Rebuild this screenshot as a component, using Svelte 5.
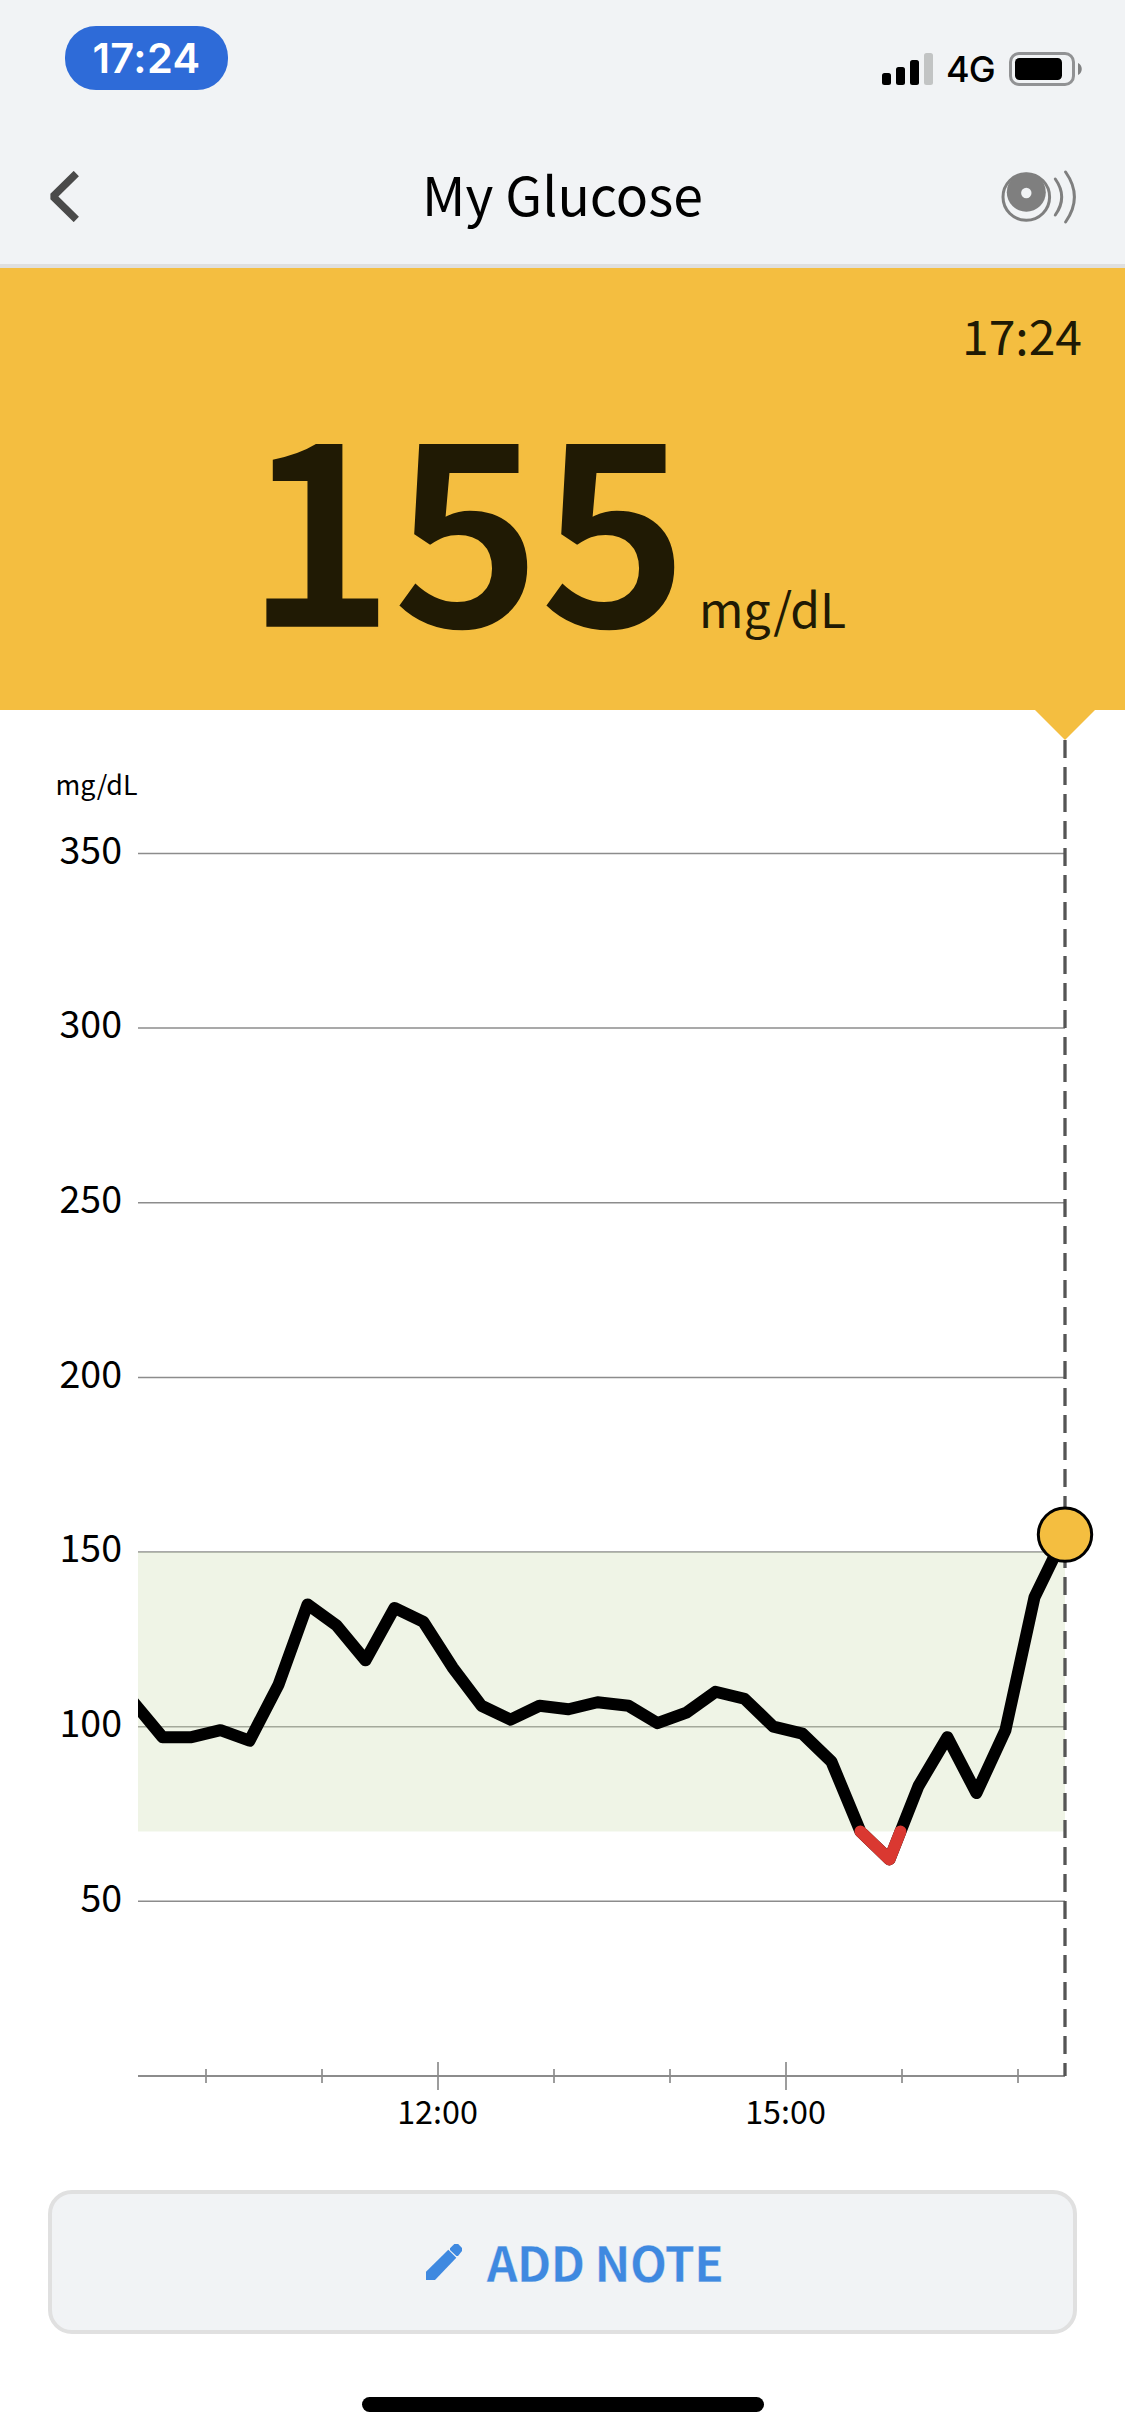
<script>
  const width = 1125;
  const height = 1480;
  const left = 138;
  const right = 1065;
  const zeroY = 1366;

  const low = 70;
  const high = 150;

  // minutes from noon, mg/dL
  const readings = [
    [-157.5, 107], [-142.5, 97], [-127.5, 97], [-112.5, 99], [-97.5, 96], [-82.5, 112],
    [-67.5, 135], [-52.5, 129], [-37.5, 119], [-22.5, 134], [-7.5, 130], [7.5, 117],
    [22.5, 106], [37.5, 102], [52.5, 106], [67.5, 105], [82.5, 107], [98.5, 106],
    [113.5, 101], [128.5, 104], [143.5, 110], [158.5, 108], [173.5, 100], [188.5, 98],
    [203.5, 90], [218.5, 70], [233.5, 62], [248.5, 83], [263.5, 97], [278.5, 81],
    [293.5, 99], [308.5, 137], [324.3, 155]
  ];

  const current = { time: '17:24', value: 155, unit: 'mg/dL' };

  const xScale = (minutes) => 438 + (minutes * 116) / 60;
  const yScale = (value) => zeroY - value * 3.493;
  const toPoints = (list) => list.map(([m, v]) => `${xScale(m)},${yScale(v)}`).join(' ');

  const yTicks = [350, 300, 250, 200, 150, 100, 50];
  const xTicks = [10, 11, 12, 13, 14, 15, 16, 17].map((hour) => ({
    x: xScale((hour - 12) * 60),
    major: hour % 3 === 0,
    label: `${hour}:00`
  }));

  // Part of the line below the target range
  function crossing(a, b) {
    const t = (low - a[1]) / (b[1] - a[1]);
    return [a[0] + t * (b[0] - a[0]), low];
  }

  const lowPoints = [];
  readings.forEach((point, i) => {
    if (point[1] >= low) return;
    lowPoints.push(crossing(readings[i - 1], point), point, crossing(point, readings[i + 1]));
  });

  const last = readings[readings.length - 1];
</script>

<div class="screen">
  <header>
    <div class="status-bar">
      <span class="clock">17:24</span>
      <div class="indicators">
        <svg class="signal" width="51" height="32" viewBox="0 0 51 32">
          <rect x="0" y="20" width="9" height="12" rx="2.5" />
          <rect x="14" y="14" width="9" height="18" rx="2.5" />
          <rect x="28" y="7" width="9" height="25" rx="2.5" />
          <rect x="42" y="0" width="9" height="32" rx="2.5" fill="#c2c4c4" />
        </svg>
        <span class="network">4G</span>
        <svg class="battery" width="73" height="34" viewBox="0 0 73 34">
          <rect x="1.5" y="1.5" width="63" height="31" rx="8.5" fill="none" stroke="#919294" stroke-width="3" />
          <rect x="6" y="6" width="47" height="22" rx="4.5" />
          <path d="M69 11c5 2 5 10 0 12z" fill="#818283" />
        </svg>
      </div>
    </div>

    <nav>
      <button class="icon" aria-label="Back">
        <svg width="30" height="51" viewBox="0 0 30 51">
          <path d="M27.3 2.5L4 25.5l23.3 23" fill="none" stroke="#4a4a4a" stroke-width="7.4" stroke-linejoin="bevel" />
        </svg>
      </button>
      <h1>My Glucose</h1>
      <button class="icon" aria-label="Scan sensor">
        <svg width="76" height="54" viewBox="0 0 76 54" fill="none" stroke="#7f7f7f" stroke-width="3" stroke-linecap="round">
          <circle cx="26.3" cy="27" r="23.3" />
          <circle cx="26.3" cy="22.3" r="19.5" fill="#7f7f7f" stroke="none" />
          <circle cx="26.3" cy="23" r="5.2" fill="#f1f3f5" stroke="none" />
          <path d="M55.3 9q12.8 18 0 36" />
          <path d="M65.6 2q17.6 25 0 50" />
        </svg>
      </button>
    </nav>
  </header>

  <section class="reading">
    <div class="time">{current.time}</div>
    <div class="level">
      <span class="value">{current.value}</span>
      <span class="unit">{current.unit}</span>
    </div>
  </section>

  <svg class="chart" {width} {height} viewBox="0 0 {width} {height}">
    <defs>
      <clipPath id="plot">
        <rect x={left} y="0" width={width - left} height={zeroY} />
      </clipPath>
    </defs>

    <text x="96.5" y="85" class="axis-unit">mg/dL</text>

    <!-- Y axis -->
    {#each yTicks as tick}
      <line class="grid" x1={left} x2={right} y1={yScale(tick)} y2={yScale(tick)} />
      <text class="y-label" x="122" y={yScale(tick) + 10.2}>{tick}</text>
    {/each}

    <!-- Target range -->
    <rect class="target" x={left} y={yScale(high)} width={right - left} height={yScale(low) - yScale(high)} />

    <!-- X axis -->
    <line class="axis" x1={left} x2={right} y1={zeroY} y2={zeroY} />
    {#each xTicks as tick}
      <line
        class="tick"
        x1={tick.x}
        x2={tick.x}
        y1={zeroY - (tick.major ? 14 : 7)}
        y2={zeroY + (tick.major ? 14 : 7)}
      />
      {#if tick.major}
        <text class="x-label" x={tick.x - 0.5} y={zeroY + 48}>{tick.label}</text>
      {/if}
    {/each}

    <line class="now" x1={right} x2={right} y1="30" y2={zeroY} />

    <g clip-path="url(#plot)">
      <polyline class="trace" points={toPoints(readings)} />
      <polyline class="trace low" points={toPoints(lowPoints)} />
    </g>
    <circle class="marker" cx={right} cy={yScale(last[1])} r="26.7" />
  </svg>

  <button class="add-note">
    <svg width="36" height="36" viewBox="0 0 36 36" fill="#3f89e0">
      <path d="M0 27.7V36h9l21.3-22.3-8-8z" />
      <path d="M24 4.3L28.3 0h3.9L36 4v3l-4 5h-1.6L24 6z" />
    </svg>
    <span>ADD NOTE</span>
  </button>

  <div class="home-indicator"></div>
</div>

<style>
  :global(body) {
    background: #fff;
  }

  .screen {
    width: 1125px;
    height: 2436px;
    display: flex;
    flex-direction: column;
    overflow: hidden;
    background: #fff;
    color: #000;
    font-family: 'Noto Sans CJK JP', 'Noto Sans', sans-serif;
  }

  header {
    box-sizing: border-box;
    height: 268px;
    background: #f1f3f5;
    border-bottom: 4px solid #dfdfdf;
  }

  .status-bar {
    display: flex;
    justify-content: space-between;
    align-items: flex-start;
    height: 129px;
    box-sizing: border-box;
    padding: 26px 43px 0 65px;
    font-family: Inter, sans-serif;
  }

  .clock {
    width: 163px;
    height: 64px;
    line-height: 64px;
    border-radius: 31px;
    background: #2e6bd8;
    color: #fff;
    font-size: 41.5px;
    font-weight: 600;
    letter-spacing: 0.4px;
    text-align: center;
  }

  .indicators {
    display: flex;
    align-items: center;
    margin-top: 26px;
    height: 34px;
  }

  .network {
    width: 48px;
    margin: 0 15px 0 13px;
    font-size: 36px;
    font-weight: 500;
    line-height: 34px;
    letter-spacing: -1px;
    white-space: nowrap;
  }

  nav {
    display: flex;
    align-items: center;
    justify-content: space-between;
    height: 135px;
    padding: 0 49px;
  }

  nav h1 {
    margin: 0;
    padding-bottom: 8px;
    font-size: 53.5px;
    font-weight: 400;
    line-height: 70px;
  }

  button {
    border: none;
    padding: 0;
    background: none;
    font-family: inherit;
  }

  .icon {
    width: 76px;
    display: flex;
  }

  .reading {
    position: relative;
    box-sizing: border-box;
    height: 442px;
    padding: 36px 43px 0;
    background: #f4be40;
    color: #201a04;
  }

  .reading::after {
    content: '';
    position: absolute;
    top: 100%;
    left: 1035px;
    border: 30px solid transparent;
    border-top-color: #f4be40;
    border-bottom: none;
  }

  .time {
    font-size: 48px;
    line-height: 60px;
    text-align: right;
  }

  .level {
    display: flex;
    align-items: baseline;
    margin-top: 27px;
    padding-left: 201px;
  }

  /* the outline in the background colour trims the bold digits a little */
  .value {
    font-size: 257px;
    font-weight: 700;
    line-height: 250px;
    letter-spacing: -4.6px;
    -webkit-text-stroke: 2.6px #f4be40;
  }

  .unit {
    margin-left: 14px;
    font-size: 48px;
    line-height: 60px;
  }

  .chart {
    display: block;
    flex: none;
  }

  .axis-unit {
    font-size: 26.8px;
    text-anchor: middle;
  }

  .y-label {
    font-size: 37.5px;
    text-anchor: end;
  }

  .x-label {
    font-size: 32.3px;
    text-anchor: middle;
  }

  .grid {
    stroke: #8c8c8c;
    stroke-width: 1.5;
  }

  .axis {
    stroke: #8c8c8c;
    stroke-width: 2;
  }

  .tick {
    stroke: #8c8c8c;
    stroke-width: 1.7;
  }

  .target {
    fill: #d0dfb8;
    opacity: 0.35;
  }

  .now {
    stroke: #555;
    stroke-width: 3.3;
    stroke-dasharray: 18 9;
  }

  .trace {
    fill: none;
    stroke: #000;
    stroke-width: 12;
    stroke-linejoin: round;
    stroke-linecap: round;
  }

  .trace.low {
    stroke: #da3831;
  }

  .marker {
    fill: #f4be40;
    stroke: #000;
    stroke-width: 3;
  }

  .add-note {
    flex: none;
    box-sizing: border-box;
    display: flex;
    align-items: center;
    justify-content: center;
    gap: 25px;
    height: 144px;
    margin: 0 48px;
    padding-left: 24px;
    border: 4px solid #e0e0e0;
    border-radius: 24px;
    background: #f1f3f5;
    color: #3f89e0;
    font-size: 48px;
    font-weight: 700;
    line-height: 60px;
  }

  .add-note span {
    padding-bottom: 2px;
    letter-spacing: -0.6px;
    -webkit-text-stroke: 0.3px #f1f3f5;
  }

  .home-indicator {
    width: 402px;
    height: 15px;
    margin: 63px auto 0;
    border-radius: 8px;
    background: #000;
  }
</style>
